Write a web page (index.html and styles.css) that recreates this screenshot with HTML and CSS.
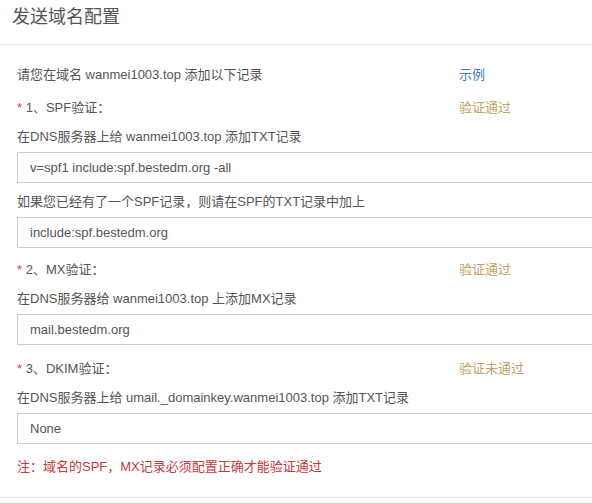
FILE: index.html
```html
<!DOCTYPE html>
<html lang="zh-CN">
<head>
<meta charset="utf-8">
<title>发送域名配置</title>
<link rel="stylesheet" href="styles.css">
</head>
<body>
<div class="panel">
  <div class="panel-header">
    <h3 class="panel-title">发送域名配置</h3>
  </div>
  <div class="panel-body">
    <div class="row intro">
      <div class="label">请您在域名 wanmei1003.top 添加以下记录</div>
      <div class="side"><a class="example">示例</a></div>
    </div>

    <div class="row status-row first">
      <div class="label"><span class="star">*</span> 1、SPF验证：</div>
      <div class="side"><span class="status">验证通过</span></div>
    </div>
    <div class="hint">在DNS服务器上给 wanmei1003.top 添加TXT记录</div>
    <div class="field">v=spf1 include:spf.bestedm.org -all</div>
    <div class="hint">如果您已经有了一个SPF记录，则请在SPF的TXT记录中加上</div>
    <div class="field">include:spf.bestedm.org</div>

    <div class="row status-row second">
      <div class="label"><span class="star">*</span> 2、MX验证：</div>
      <div class="side"><span class="status">验证通过</span></div>
    </div>
    <div class="hint">在DNS服务器给 wanmei1003.top 上添加MX记录</div>
    <div class="field">mail.bestedm.org</div>

    <div class="row status-row third">
      <div class="label"><span class="star">*</span> 3、DKIM验证：</div>
      <div class="side"><span class="status">验证未通过</span></div>
    </div>
    <div class="hint">在DNS服务器上给 umail._domainkey.wanmei1003.top 添加TXT记录</div>
    <div class="field">None</div>

    <div class="note">注：域名的SPF，MX记录必须配置正确才能验证通过</div>
  </div>
  <div class="panel-footer"></div>
</div>
</body>
</html>
```

FILE: styles.css
```css
html, body {
  margin: 0;
  padding: 0;
  background: #fff;
  overflow: hidden;
}

body {
  font-family: "Liberation Sans", "Noto Sans CJK SC", sans-serif;
  font-size: 13px;
  color: #555;
}

.panel {
  width: 592px;
  overflow: hidden;
}

.panel-header {
  height: 45px;
  border-bottom: 1px solid #e5e5e5;
  padding: 0 12px;
  box-sizing: border-box;
}

.panel-title {
  margin: 0;
  font-weight: normal;
  font-size: 18px;
  line-height: 34px;
  color: #555;
}

.panel-body {
  padding: 20px 0 20px 17px;
}

.row {
  display: flex;
  line-height: 20px;
}

.label {
  width: 442px;
  flex: none;
  white-space: nowrap;
}

.side {
  white-space: nowrap;
}

.example {
  color: #3b7bbf;
  text-decoration: none;
}

.status {
  color: #c4a064;
}

.star {
  color: #e4393c;
}

.status-row.first { margin-top: 13px; }
.status-row.second { margin-top: 12px; }
.status-row.third { margin-top: 14px; }

.hint {
  line-height: 20px;
  margin-top: 9px;
  white-space: nowrap;
}

.field {
  margin-top: 5px;
  width: 620px;
  height: 31px;
  box-sizing: border-box;
  border: 1px solid #ccc;
  padding: 0 12px;
  line-height: 29px;
  color: #555;
  white-space: nowrap;
}

.note {
  margin-top: 13px;
  line-height: 20px;
  color: #c9383a;
}

.panel-footer {
  border-top: 1px solid #e5e5e5;
  height: 7px;
}
```
